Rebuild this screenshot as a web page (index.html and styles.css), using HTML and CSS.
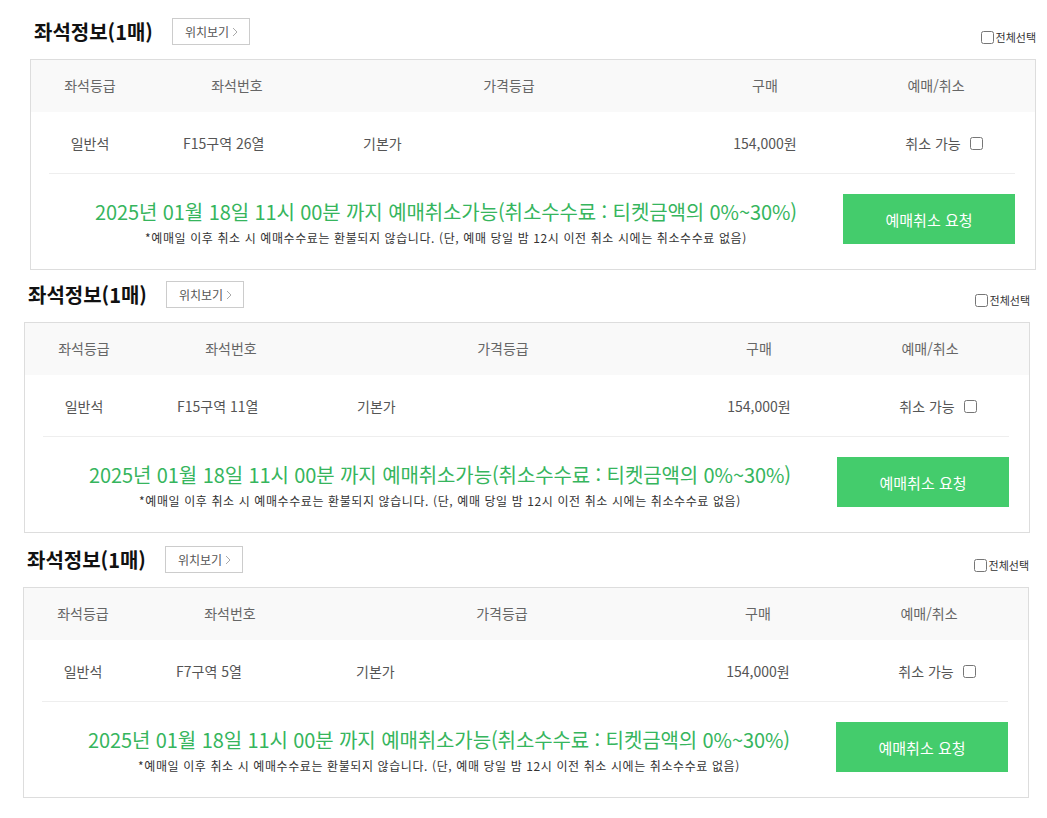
FILE: index.html
```html
<!DOCTYPE html>
<html lang="ko">
<head>
    <meta charset="UTF-8">
    <title>좌석정보</title>
    <link rel="stylesheet" href="styles.css">
</head>
<body>
    <div class="seat-block block-1">
        <div class="seat-head">
            <h2 class="seat-title">좌석정보(1매)</h2>
            <button type="button" class="btn-location">위치보기 <svg class="chev" width="6" height="10" viewBox="0 0 6 10"><path d="M1 1l4 4-4 4" fill="none" stroke="#aaa" stroke-width="1"/></svg></button>
            <label class="select-all"><input type="checkbox">전체선택</label>
        </div>
        <div class="seat-box">
            <div class="seat-row row-head">
                <div class="cell c-center">좌석등급</div>
                <div class="cell c-center">좌석번호</div>
                <div class="cell c-center">가격등급</div>
                <div class="cell c-center">구매</div>
                <div class="cell c-center">예매/취소</div>
            </div>
            <div class="seat-row row-data">
                <div class="cell c-center">일반석</div>
                <div class="cell c-seat">F15구역 26열</div>
                <div class="cell c-price">기본가</div>
                <div class="cell c-center">154,000원</div>
                <div class="cell c-cancel"><label class="cancel-check">취소 가능 <input type="checkbox"></label></div>
            </div>
            <div class="cancel-area">
                <div class="cancel-text">
                    <p class="deadline">2025년 01월 18일 11시 00분 까지 예매취소가능(취소수수료 : 티켓금액의 0%~30%)</p>
                    <p class="notice">*예매일 이후 취소 시 예매수수료는 환불되지 않습니다. (단, 예매 당일 밤 12시 이전 취소 시에는 취소수수료 없음)</p>
                </div>
                <button type="button" class="btn-cancel">예매취소 요청</button>
            </div>
        </div>
    </div>

    <div class="seat-block block-2">
        <div class="seat-head">
            <h2 class="seat-title">좌석정보(1매)</h2>
            <button type="button" class="btn-location">위치보기 <svg class="chev" width="6" height="10" viewBox="0 0 6 10"><path d="M1 1l4 4-4 4" fill="none" stroke="#aaa" stroke-width="1"/></svg></button>
            <label class="select-all"><input type="checkbox">전체선택</label>
        </div>
        <div class="seat-box">
            <div class="seat-row row-head">
                <div class="cell c-center">좌석등급</div>
                <div class="cell c-center">좌석번호</div>
                <div class="cell c-center">가격등급</div>
                <div class="cell c-center">구매</div>
                <div class="cell c-center">예매/취소</div>
            </div>
            <div class="seat-row row-data">
                <div class="cell c-center">일반석</div>
                <div class="cell c-seat">F15구역 11열</div>
                <div class="cell c-price">기본가</div>
                <div class="cell c-center">154,000원</div>
                <div class="cell c-cancel"><label class="cancel-check">취소 가능 <input type="checkbox"></label></div>
            </div>
            <div class="cancel-area">
                <div class="cancel-text">
                    <p class="deadline">2025년 01월 18일 11시 00분 까지 예매취소가능(취소수수료 : 티켓금액의 0%~30%)</p>
                    <p class="notice">*예매일 이후 취소 시 예매수수료는 환불되지 않습니다. (단, 예매 당일 밤 12시 이전 취소 시에는 취소수수료 없음)</p>
                </div>
                <button type="button" class="btn-cancel">예매취소 요청</button>
            </div>
        </div>
    </div>

    <div class="seat-block block-3">
        <div class="seat-head">
            <h2 class="seat-title">좌석정보(1매)</h2>
            <button type="button" class="btn-location">위치보기 <svg class="chev" width="6" height="10" viewBox="0 0 6 10"><path d="M1 1l4 4-4 4" fill="none" stroke="#aaa" stroke-width="1"/></svg></button>
            <label class="select-all"><input type="checkbox">전체선택</label>
        </div>
        <div class="seat-box">
            <div class="seat-row row-head">
                <div class="cell c-center">좌석등급</div>
                <div class="cell c-center">좌석번호</div>
                <div class="cell c-center">가격등급</div>
                <div class="cell c-center">구매</div>
                <div class="cell c-center">예매/취소</div>
            </div>
            <div class="seat-row row-data">
                <div class="cell c-center">일반석</div>
                <div class="cell c-seat">F7구역 5열</div>
                <div class="cell c-price">기본가</div>
                <div class="cell c-center">154,000원</div>
                <div class="cell c-cancel"><label class="cancel-check">취소 가능 <input type="checkbox"></label></div>
            </div>
            <div class="cancel-area">
                <div class="cancel-text">
                    <p class="deadline">2025년 01월 18일 11시 00분 까지 예매취소가능(취소수수료 : 티켓금액의 0%~30%)</p>
                    <p class="notice">*예매일 이후 취소 시 예매수수료는 환불되지 않습니다. (단, 예매 당일 밤 12시 이전 취소 시에는 취소수수료 없음)</p>
                </div>
                <button type="button" class="btn-cancel">예매취소 요청</button>
            </div>
        </div>
    </div>
</body>
</html>
```

FILE: styles.css
```css
body {
    margin: 0;
    padding-top: 18px;
    font-family: "Noto Sans CJK KR", "Noto Sans", sans-serif;
    color: #555;
    background: #fff;
}
.seat-block {
    width: 1006px;
}
.block-1 {
    margin-left: 30px;
}
.block-2 {
    margin-left: 24px;
    margin-top: 11px;
}
.block-3 {
    margin-left: 23px;
    margin-top: 13px;
}
.seat-head {
    display: flex;
    align-items: center;
    height: 27px;
    margin-bottom: 14px;
}
.seat-title {
    margin: -1px 0 0 4px;
    font-size: 20px;
    font-weight: bold;
    color: #111;
    line-height: 27px;
}
.btn-location {
    margin-left: 19px;
    height: 27px;
    padding: 0 11px 0 12px;
    border: 1px solid #ccc;
    background: #fff;
    font-family: inherit;
    font-size: 12px;
    color: #555;
    display: flex;
    align-items: center;
    gap: 3px;
    cursor: pointer;
}
.chev {
    display: block;
}
.select-all {
    margin-left: auto;
    align-self: flex-end;
    display: flex;
    align-items: center;
    font-size: 11px;
    color: #333;
    line-height: 14px;
    margin-bottom: 1px;
}
.select-all input {
    width: 13px;
    height: 13px;
    margin: 0 2px 0 0;
}
.seat-box {
    border: 1px solid #ddd;
}
.seat-row {
    display: grid;
    grid-template-columns: 118px 176px 368px 144px 1fr;
    align-items: center;
    font-size: 14px;
    box-sizing: border-box;
}
.row-head {
    height: 52px;
    padding-bottom: 3px;
    background: #f9f9f9;
    color: #666;
}
.row-data {
    height: 61px;
    color: #555;
}
.c-center {
    text-align: center;
}
.c-seat {
    padding-left: 34px;
}
.c-price {
    padding-left: 38px;
}
.c-cancel {
    text-align: center;
    padding-left: 16px;
}
.cancel-check {
    display: inline-flex;
    align-items: center;
    gap: 5px;
}
.cancel-check input {
    width: 13px;
    height: 13px;
    margin: 2px 0 0 4px;
}
.cancel-area {
    margin: 0 20px 0 18px;
    border-top: 1px solid #eee;
    padding: 20px 0 25px;
    display: flex;
    align-items: flex-start;
}
.cancel-text {
    flex: 1;
    height: 50px;
    text-align: center;
    padding-top: 6px;
    box-sizing: border-box;
}
.deadline {
    margin: 0;
    font-size: 20px;
    line-height: 24px;
    color: #36b55d;
    letter-spacing: -0.1px;
}
.notice {
    margin: 6px 0 0;
    font-size: 12px;
    line-height: 16px;
    color: #333;
    letter-spacing: 0.6px;
}
.btn-cancel {
    width: 172px;
    height: 50px;
    border: none;
    background: #44cc6c;
    color: #fff;
    font-family: inherit;
    font-size: 15px;
    cursor: pointer;
}
```
